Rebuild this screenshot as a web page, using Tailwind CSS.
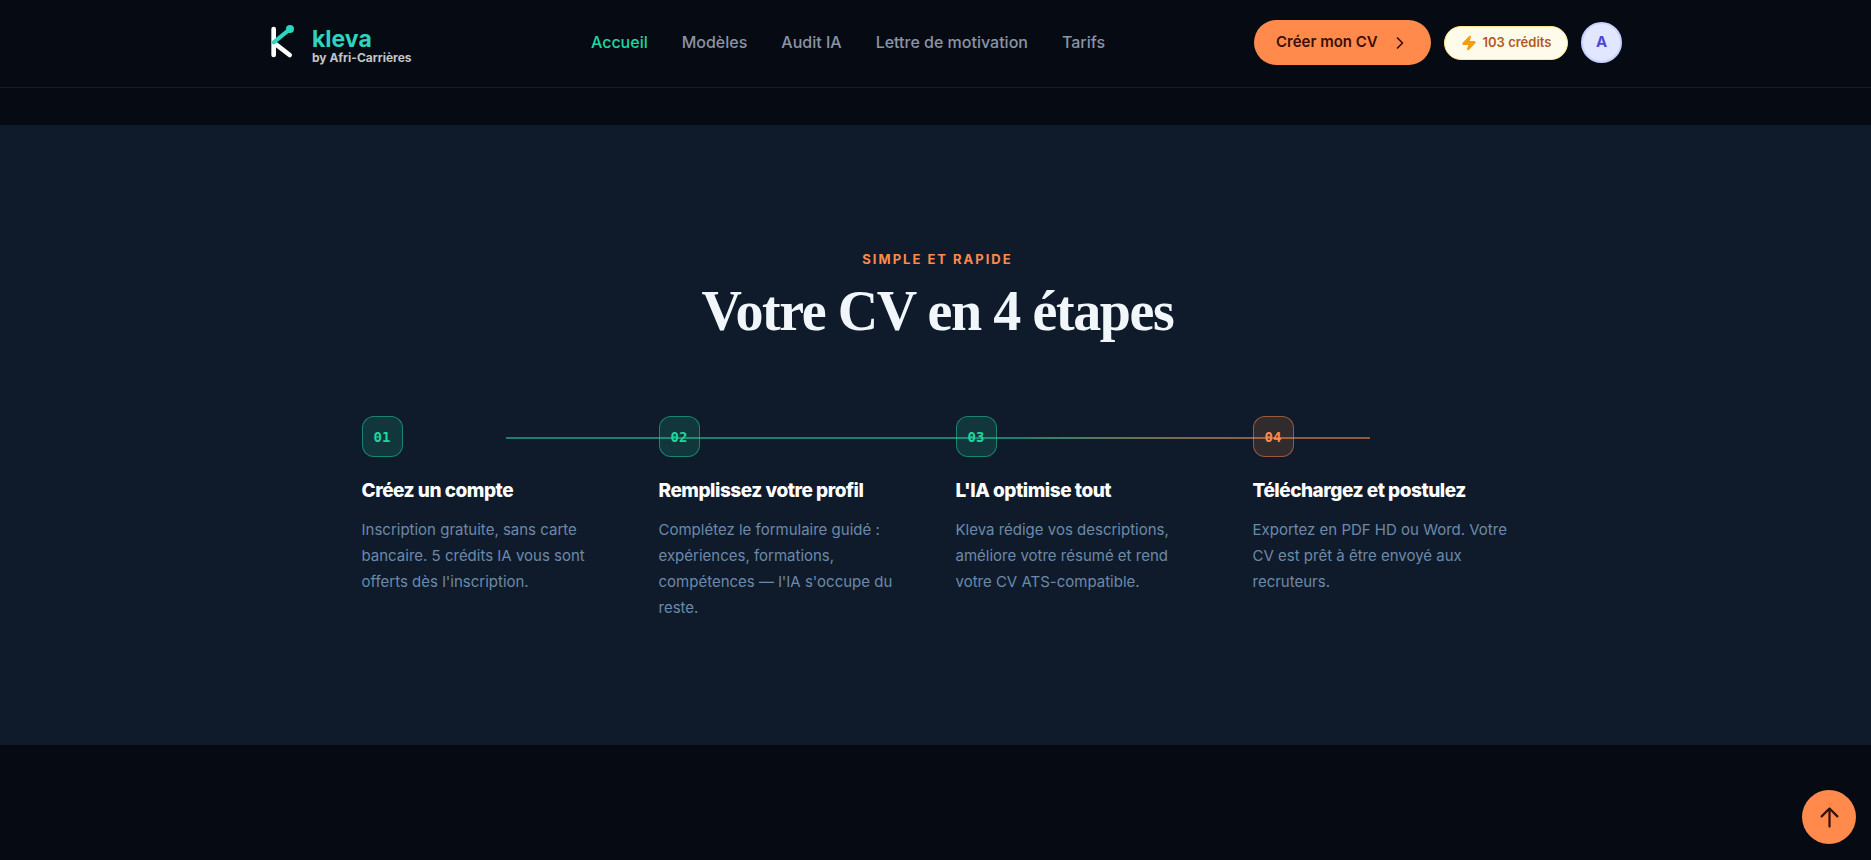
<!DOCTYPE html>
<html lang="fr">
<head>
    <meta charset="UTF-8">
    <meta name="viewport" content="width=device-width, initial-scale=1.0">
    <title>Kleva by Afri-Carrières</title>
    <script src="https://cdn.jsdelivr.net/npm/@tailwindcss/browser@4"></script>
</head>
<body class="min-h-screen bg-[#060b13] font-['Inter','Liberation_Sans',sans-serif]">
    <!-- Header -->
    <header class="sticky top-0 z-20 border-b border-white/8 bg-[#060b13]">
        <div class="max-w-[1373px] mx-auto pt-5 pb-[18px] flex justify-between items-center">
            <a href="#" class="w-[193px] pl-[11px] pb-1 flex items-start gap-[7px]">
                <svg class="size-[45px] shrink-0" viewBox="60 60 135 135" fill="none" stroke-linecap="round" aria-hidden="true">
                    <path d="M101 87V165M104 130L149 165" stroke="#fff" stroke-width="14"/>
                    <path d="M101 127L149 88" stroke="#2dd4bf" stroke-width="12"/>
                    <circle cx="150" cy="87" r="12" fill="#2dd4bf"/>
                </svg>
                <span class="pt-[7px] flex flex-col whitespace-nowrap">
                    <span class="text-[23px] leading-6 font-bold text-[#2dd4bf]">kleva</span>
                    <span class="text-[12px] leading-[14px] font-bold text-[#c3c5c9]">by Afri-Carrières</span>
                </span>
            </a>

            <nav class="pb-1.5 flex items-center gap-[34px] text-base font-medium text-[#8b93a5]">
                <a href="#" class="text-[#1fd6a0]">Accueil</a>
                <a href="#" class="hover:text-white">Modèles</a>
                <a href="#" class="hover:text-white">Audit IA</a>
                <a href="#" class="hover:text-white">Lettre de motivation</a>
                <a href="#" class="hover:text-white">Tarifs</a>
            </nav>

            <div class="pb-1 flex items-center gap-[13px]">
                <button class="w-[177px] h-[45px] pl-[22px] flex items-center gap-3 rounded-full bg-[#ff8a4c] text-[15px] font-semibold text-[#3b0f04] whitespace-nowrap">
                    Créer mon CV
                    <svg class="size-5" viewBox="0 0 24 24" fill="none" stroke="currentColor" stroke-width="2" stroke-linecap="round" stroke-linejoin="round" aria-hidden="true">
                        <path d="M9 18l6-6-6-6"/>
                    </svg>
                </button>
                <a href="#" class="w-[124px] h-[34px] flex items-center justify-center gap-1.5 rounded-full border border-[#fde68a] bg-[#fffbeb] text-[13px] font-semibold text-[#b4581f] whitespace-nowrap">
                    <svg class="size-4" viewBox="0 0 24 24" fill="#f59e0b" stroke="#f59e0b" stroke-width="2" stroke-linejoin="round" aria-hidden="true">
                        <path d="M4 14a1 1 0 0 1-.78-1.63l9.9-10.2a.5.5 0 0 1 .86.46l-1.92 6.02A1 1 0 0 0 13 10h7a1 1 0 0 1 .78 1.63l-9.9 10.2a.5.5 0 0 1-.86-.46l1.92-6.02A1 1 0 0 0 11 14z"/>
                    </svg>
                    103 crédits
                </a>
                <button class="size-[41px] rounded-full border-2 border-[#c7d2fe] bg-[#e0e7ff] text-[15px] font-bold text-[#4f46d5]">A</button>
            </div>
        </div>
    </header>

    <!-- Steps -->
    <main class="pt-[37px]">
        <section class="py-[124px] pl-5 pr-4 bg-[#0f1b2a]">
            <div class="max-w-6xl mx-auto">
                <p class="text-center text-[13px] leading-5 font-bold tracking-[2px] text-[#ff8a4c]">SIMPLE ET RAPIDE</p>
                <h2 class="mt-2.5 mb-[72px] text-center text-[56px] leading-[65px] font-bold tracking-tight text-[#f1f6fb] font-['Liberation_Serif',serif]">Votre CV en 4 étapes</h2>

                <div class="relative">
                    <!-- Connecting line -->
                    <div class="absolute top-[21px] inset-x-[12.5%] h-0.5 bg-linear-to-r from-[#1fd6a0] from-60% to-[#ff8a4c] to-90% opacity-55"></div>

                    <ol class="relative grid grid-cols-4 gap-9">
                        <li>
                            <div class="size-[41px] flex items-center justify-center rounded-xl border border-[#1fd6a0]/50 bg-[#1fd6a0]/15 text-sm font-bold text-[#1fd6a0] font-['DejaVu_Sans_Mono',monospace]">01</div>
                            <h3 class="mt-5 mb-3 text-[19px] leading-7 font-extrabold tracking-tight text-white whitespace-nowrap">Créez un compte</h3>
                            <p class="text-[15px] leading-[26px] text-[#6b8aab] whitespace-nowrap">Inscription gratuite, sans carte<br>bancaire. 5 crédits IA vous sont<br>offerts dès l'inscription.</p>
                        </li>
                        <li>
                            <div class="size-[41px] flex items-center justify-center rounded-xl border border-[#1fd6a0]/50 bg-[#1fd6a0]/15 text-sm font-bold text-[#1fd6a0] font-['DejaVu_Sans_Mono',monospace]">02</div>
                            <h3 class="mt-5 mb-3 text-[19px] leading-7 font-extrabold tracking-tight text-white whitespace-nowrap">Remplissez votre profil</h3>
                            <p class="text-[15px] leading-[26px] text-[#6b8aab] whitespace-nowrap">Complétez le formulaire guidé :<br>expériences, formations,<br>compétences — l'IA s'occupe du<br>reste.</p>
                        </li>
                        <li>
                            <div class="size-[41px] flex items-center justify-center rounded-xl border border-[#1fd6a0]/50 bg-[#1fd6a0]/15 text-sm font-bold text-[#1fd6a0] font-['DejaVu_Sans_Mono',monospace]">03</div>
                            <h3 class="mt-5 mb-3 text-[19px] leading-7 font-extrabold tracking-tight text-white whitespace-nowrap">L'IA optimise tout</h3>
                            <p class="text-[15px] leading-[26px] text-[#6b8aab] whitespace-nowrap">Kleva rédige vos descriptions,<br>améliore votre résumé et rend<br>votre CV ATS-compatible.</p>
                        </li>
                        <li>
                            <div class="size-[41px] flex items-center justify-center rounded-xl border border-[#ff8a4c]/50 bg-[#ff8a4c]/15 text-sm font-bold text-[#ff8a4c] font-['DejaVu_Sans_Mono',monospace]">04</div>
                            <h3 class="mt-5 mb-3 text-[19px] leading-7 font-extrabold tracking-tight text-white whitespace-nowrap">Téléchargez et postulez</h3>
                            <p class="text-[15px] leading-[26px] text-[#6b8aab] whitespace-nowrap">Exportez en PDF HD ou Word. Votre<br>CV est prêt à être envoyé aux<br>recruteurs.</p>
                        </li>
                    </ol>
                </div>
            </div>
        </section>
    </main>

    <!-- Back to top -->
    <button aria-label="Retour en haut" class="fixed right-[15px] bottom-4 z-20 size-[54px] flex items-center justify-center rounded-full bg-[#ff8a4c] text-[#3b0f04]">
        <svg class="size-[27px]" viewBox="0 0 24 24" fill="none" stroke="currentColor" stroke-width="2" stroke-linecap="round" stroke-linejoin="round" aria-hidden="true">
            <path d="M12 20V4M5 11l7-7 7 7"/>
        </svg>
    </button>
</body>
</html>
